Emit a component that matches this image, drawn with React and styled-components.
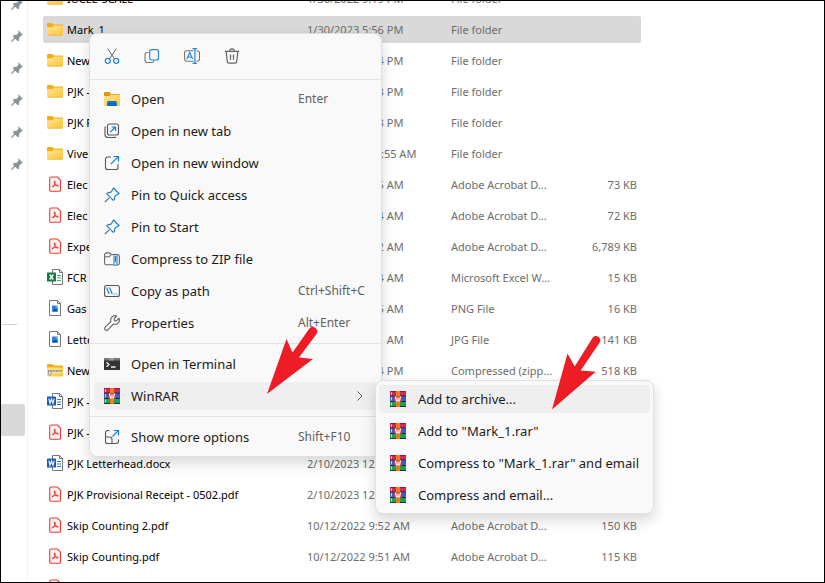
import React from "react";
import styled, { createGlobalStyle } from "styled-components";

const files = [
	{ icon: "folder", name: "IUCEE-SCALE", date: "1/30/2022 9:19 PM", type: "File folder" },
	{ icon: "folder", name: "Mark_1", date: "1/30/2023 5:56 PM", type: "File folder", selected: true },
	{ icon: "folder", name: "New", date: "1/30/2023 5:54 PM", type: "File folder" },
	{ icon: "folder", name: "PJK -", date: "1/30/2023 5:53 PM", type: "File folder" },
	{ icon: "folder", name: "PJK F", date: "1/30/2023 5:53 PM", type: "File folder" },
	{ icon: "folder", name: "Vive", date: "10/12/2022 10:55 AM", type: "File folder" },
	{ icon: "pdf", name: "Elec", date: "2/10/2023 9:55 AM", type: "Adobe Acrobat D...", size: "73 KB" },
	{ icon: "pdf", name: "Elec", date: "2/10/2023 9:54 AM", type: "Adobe Acrobat D...", size: "72 KB" },
	{ icon: "pdf", name: "Expe", date: "2/10/2023 9:52 AM", type: "Adobe Acrobat D...", size: "6,789 KB" },
	{ icon: "excel", name: "FCR", date: "2/10/2023 9:54 AM", type: "Microsoft Excel W...", size: "15 KB" },
	{ icon: "image", name: "Gas", date: "2/10/2023 9:55 AM", type: "PNG File", size: "16 KB" },
	{ icon: "image", name: "Lette", date: "2/10/2023 9:51 AM", type: "JPG File", size: "141 KB" },
	{ icon: "zip", name: "New", date: "2/10/2023 5:54 PM", type: "Compressed (zipp...", size: "518 KB" },
	{ icon: "word", name: "PJK -", date: "2/10/2023 12:35 PM", type: "", size: "" },
	{ icon: "pdf", name: "PJK -", date: "2/10/2023 12:35 PM", type: "", size: "" },
	{ icon: "word", name: "PJK Letterhead.docx", date: "2/10/2023 12:35 PM", type: "", size: "" },
	{ icon: "pdf", name: "PJK Provisional Receipt - 0502.pdf", date: "2/10/2023 12:35 PM", type: "", size: "" },
	{ icon: "pdf", name: "Skip Counting 2.pdf", date: "10/12/2022 9:52 AM", type: "Adobe Acrobat D...", size: "150 KB" },
	{ icon: "pdf", name: "Skip Counting.pdf", date: "10/12/2022 9:51 AM", type: "Adobe Acrobat D...", size: "115 KB" },
	{ icon: "pdf", name: "", date: "", type: "", size: "" },
];

const commands = [
	{ icon: "cut", title: "Cut" },
	{ icon: "copy", title: "Copy" },
	{ icon: "rename", title: "Rename" },
	{ icon: "trash", title: "Delete" },
];

const menuGroups = [
	[
		{ icon: "open", title: "Open", keys: "Enter" },
		{ icon: "newTab", title: "Open in new tab" },
		{ icon: "newWindow", title: "Open in new window" },
		{ icon: "pin", title: "Pin to Quick access" },
		{ icon: "pin", title: "Pin to Start" },
		{ icon: "compress", title: "Compress to ZIP file" },
		{ icon: "path", title: "Copy as path", keys: "Ctrl+Shift+C" },
		{ icon: "wrench", title: "Properties", keys: "Alt+Enter" },
	],
	[
		{ icon: "terminal", title: "Open in Terminal" },
		{ icon: "winrar", title: "WinRAR", active: true, submenu: true },
	],
	[{ icon: "more", title: "Show more options", keys: "Shift+F10" }],
];

const archiveItems = [
	{ title: "Add to archive...", active: true },
	{ title: 'Add to "Mark_1.rar"' },
	{ title: 'Compress to "Mark_1.rar" and email' },
	{ title: "Compress and email..." },
];

const officePage = (
	<path d="M5.5.5h7l3 3v12h-10z M12.5.5v3h3" fill="#fff" stroke="#777" />
);

const icons = {
	folder: (
		<>
			<path d="M0 3.2A1.2 1.2 0 0 1 1.2 2h4l1.6 1.6H15a1 1 0 0 1 1 1V8H0z" fill="#f2ae12" />
			<path d="M0 6.2h5.2L7 4.6h8a1 1 0 0 1 1 1v7.9a1 1 0 0 1-1 1H1a1 1 0 0 1-1-1z" fill="url(#folderFill)" />
			<path d="M.5 14.2h15" stroke="#e5b13b" strokeWidth=".7" />
		</>
	),
	pdf: (
		<>
			<path d="M4 1h6.300l3.200 3.200v9.700a1.300 1.300 0 0 1-1.300 1.300H4a1.300 1.300 0 0 1-1.300-1.300V2.300A1.300 1.300 0 0 1 4 1z" fill="#fff5f4" stroke="#ee3b34" strokeWidth="1.100" />
			<path d="M7.700 4.900c-.9 0-.5 1.700.2 2.900.8 1.400 1.900 2.500 3 2.400 1.100-.2 0-1.400-2.300-1.100-1.700.2-3.400.8-3.300 1.600.2 1 1.700-.3 2.400-2 .5-1.300.7-3.800 0-3.800z" fill="none" stroke="#ee2a24" />
		</>
	),
	excel: (
		<>
			{officePage}
			<path d="M10 6.500h4M10 9h4M10 11.500h4" stroke="#3fae6b" strokeWidth="1.200" />
			<rect y="3.500" width="9" height="9" rx=".6" fill="#107c41" />
			<path d="M2.700 5.500l3.600 5M6.300 5.500l-3.600 5" stroke="#fff" strokeWidth="1.400" />
		</>
	),
	word: (
		<>
			{officePage}
			<path d="M10 6.500h4M10 9h4M10 11.500h4" stroke="#2b7cd3" strokeWidth="1.200" />
			<rect y="3.500" width="9" height="9" rx=".6" fill="#185abd" />
			<path d="M1.800 5.700l1.200 4.600 1.500-4.300L6 10.300l1.200-4.600" fill="none" stroke="#fff" strokeWidth="1.100" />
		</>
	),
	image: (
		<>
			<path d="M2.500.5h8l3 3v12h-11z M10.500.5v3h3" fill="#fff" stroke="#777" />
			<rect x="5" y="5.500" width="6" height="6" fill="#2b86e2" />
			<path d="M5 11.500l3-3 3 3z" fill="#0d4fa6" />
			<path d="M8 5.500h3v3z" fill="#8cc9f8" />
		</>
	),
	zip: (
		<>
			<path d="M0 3.200A1.200 1.200 0 0 1 1.200 2h4l1.600 1.600H15a1 1 0 0 1 1 1V8H0z" fill="#f2ae12" />
			<path d="M0 5.600h16v8a1 1 0 0 1-1 1H1a1 1 0 0 1-1-1z" fill="url(#folderFill)" />
			<path d="M1 9h14" stroke="#8d8d8d" strokeWidth="2" strokeDasharray="1 .6" />
			<path d="M1 10.500h14" stroke="#e8e8e8" />
			<rect x="1.500" y="9" width="2.500" height="4.500" rx="1" fill="#ddd" stroke="#888" strokeWidth=".7" />
		</>
	),
	pinned: (
		<>
			<path d="M9.300 2.200l4.500 4.500-1.400.8-2 2-.3 2.700-1.200 1.200-5.100-5.100L5 7.100l2.700-.4 1.700-2z" fill="#8a939b" />
			<path d="M6.500 9.500L2.500 13.500" stroke="#8a939b" strokeWidth="1.300" />
		</>
	),
	cut: (
		<>
			<path d="M3.600.5l6.800 10.300M12.400.5L5.600 10.800" stroke="#666" />
			<circle cx="3.800" cy="12.800" r="2.500" stroke="#2788d8" strokeWidth="1.300" />
			<circle cx="12.200" cy="12.800" r="2.500" stroke="#2788d8" strokeWidth="1.300" />
		</>
	),
	copy: (
		<>
			<path d="M4.500 4.500H3.200A2.200 2.200 0 0 0 1 6.700v5.600a2.200 2.200 0 0 0 2.200 2.200h4.600A2.200 2.200 0 0 0 10 12.500" stroke="#777" strokeWidth="1.100" />
			<rect x="5.700" y="1.600" width="8.800" height="10.400" rx="2" stroke="#2788d8" strokeWidth="1.200" />
		</>
	),
	rename: (
		<>
			<path d="M9.500 2.700H3A2.500 2.500 0 0 0 .5 5.200v5.600A2.500 2.500 0 0 0 3 13.300h6.500M12.500 2.700h.5a2.500 2.500 0 0 1 2.500 2.500v5.600a2.500 2.500 0 0 1-2.500 2.500h-.5" stroke="#777" strokeWidth="1.100" />
			<path d="M2.800 11L5.700 4.500 8.600 11M3.800 9h3.800M8.500.6h4.500M8.500 15.400H13M10.900.6v14.800" stroke="#2788d8" strokeWidth="1.200" />
		</>
	),
	trash: (
		<path d="M.8 3.300h14.400M5.600 3.300C5.700 1.500 6.500.8 8 .8s2.300.7 2.400 2.500M2.200 3.300l1 10.200c.1 1 .8 1.700 1.800 1.700h6c1 0 1.700-.7 1.800-1.700l1-10.200M6.500 6.500v5.200M9.500 6.500v5.200" stroke="#666" strokeWidth="1.200" />
	),
	open: (
		<>
			<path d="M0 2a1 1 0 0 1 1-1h4.500L7.200 3H15a1 1 0 0 1 1 1v4H0z" fill="#dd9a0c" />
			<path d="M0 5h5.500L7 3.800h8a1 1 0 0 1 1 1V14a1 1 0 0 1-1 1H1a1 1 0 0 1-1-1z" fill="url(#folderFill)" />
			<path d="M3 15v-3.500A1.500 1.500 0 0 1 4.500 10h7a1.500 1.500 0 0 1 1.500 1.500V15z" fill="#0f78d4" />
			<path d="M5 12.800h6" stroke="#094e93" strokeWidth="1.200" />
		</>
	),
	newTab: (
		<>
			<rect x="3.500" y="1" width="11" height="11" rx="2" stroke="#555" strokeWidth="1.100" />
			<path d="M1.500 3.500A2.500 2.500 0 0 0 1 5v6.500A3 3 0 0 0 4 14.500h6.500a2.500 2.500 0 0 0 1.600-.5" stroke="#555" strokeWidth="1.100" />
			<path d="M6.300 9.200l5.200-5.200M7.600 4h3.900v3.900" stroke="#0f7bd6" strokeWidth="1.200" />
		</>
	),
	newWindow: (
		<>
			<path d="M7 2H3.500A2 2 0 0 0 1.500 4v8.500a2 2 0 0 0 2 2H12a2 2 0 0 0 2-2V9" stroke="#555" strokeWidth="1.100" />
			<path d="M6.800 9.200L14.400 1.600M9.500 1.500h5v5" stroke="#0f7bd6" strokeWidth="1.200" />
		</>
	),
	pin: (
		<>
			<path d="M5.200 10.800L.8 15.200" stroke="#666" strokeWidth="1.200" />
			<path d="M9.500 1l5.500 5.500-1 .8-2.800 1.500-.9 3.600-1 1L2.700 6.800l1-1 3.700-.9L8.800 2z" stroke="#1a82d8" strokeWidth="1.200" strokeLinejoin="round" />
		</>
	),
	compress: (
		<>
			<path d="M9.500 13.800H2.500A1.900 1.900 0 0 1 .6 11.900V3.800a1.900 1.900 0 0 1 1.900-1.900h3L7.200 3.500h6.300a1.900 1.900 0 0 1 1.900 1.900v6.500a1.900 1.900 0 0 1-1.900 1.900M.8 5.700h4.500L7.200 3.500" stroke="#666" strokeWidth="1.100" />
			<path d="M10 4v10.200h3V4" stroke="#1a82d8" strokeWidth="1.100" />
			<path d="M10.800 5.500h1.400M10.800 7.500h1.400M10.800 9.500h1.400M11.500 5v6" stroke="#1a82d8" />
		</>
	),
	path: (
		<>
			<rect x=".6" y="2.500" width="14.800" height="11" rx="2" stroke="#555" strokeWidth="1.100" />
			<path d="M2.500 4.500l2.700 6.500M5.500 4.500l2.700 6.500" stroke="#1a82d8" strokeWidth="1.200" />
			<path d="M9.500 11h1.200M12 11h1.200" stroke="#1a82d8" strokeWidth="1.200" />
		</>
	),
	wrench: (
		<path d="M15 3.300l-2.700 2.600-1.900-.3-.3-1.900L12.700 1A4.300 4.300 0 0 0 7 6.500L1.200 12.200a1.800 1.800 0 0 0 2.600 2.600L9.500 9A4.300 4.300 0 0 0 15 3.300z" stroke="#666" strokeWidth="1.100" strokeLinejoin="round" />
	),
	terminal: (
		<>
			<rect y="2" width="16" height="12" rx=".6" fill="#333" />
			<path d="M0 2h16v2.500H0z" fill="#777" />
			<path d="M5 2h5v2.500H5z" fill="#999" />
			<path d="M2.500 6.200L5 8.500l-2.500 2.300M7 11h4.500" stroke="#eee" strokeWidth="1.300" />
		</>
	),
	winrar: (
		<>
			<rect width="16" height="5" fill="#d02a55" />
			<rect y="5" width="16" height="6" fill="#4a58c0" />
			<rect y="11" width="16" height="5" fill="#1fa04a" />
			<path d="M0 .5h16" stroke="#8f1d3f" />
			<path d="M0 5h16M0 10.500h16M0 15.500h16" stroke="#2b2350" />
			<path d="M1.500 1v3M1.500 6.200v3.300M1.500 11.500v3" stroke="#ffd23c" />
			<rect x="6" width="4" height="16" fill="#f07c1e" />
			<rect x="4.500" y="5" width="7" height="6" fill="#d8402a" />
			<path d="M5.500 5.500l1 4.500h3l1-4.500M8 6.500V10" stroke="#fff" strokeWidth="1.200" />
		</>
	),
	more: (
		<>
			<path d="M5.500 1.500H4A2.500 2.500 0 0 0 1.500 4v8.500a2 2 0 0 0 2 2H12a2.500 2.500 0 0 0 2.500-2.500V10.500M1.500 8H5.500A2.500 2.500 0 0 1 8 10.500v4" stroke="#555" strokeWidth="1.100" />
			<path d="M8.500 7.500L14.300 1.700M9.500 1.500h5v5" stroke="#0f7bd6" strokeWidth="1.200" />
		</>
	),
};

function Icon({ name }) {
	return (
		<Glyph viewBox="0 0 16 16" fill="none" aria-hidden="true">
			{icons[name]}
		</Glyph>
	);
}

function Sidebar() {
	return (
		<Side>
			{[1, 2, 3, 4, 5, 6].map((pin) => (
				<SidePin key={pin}>
					<Icon name="pinned" />
				</SidePin>
			))}
			<SideRule />
			<SideCurrent />
		</Side>
	);
}

function FileList() {
	return (
		<Table>
			<colgroup>
				<col width="260" />
				<col width="144" />
				<col width="126" />
				<col width="68" />
			</colgroup>
			<tbody>
				{files.map((file, index) => (
					<Row key={index} $selected={file.selected}>
						<NameCell>
							<FileName>
								<Icon name={file.icon} />
								{file.name}
							</FileName>
						</NameCell>
						<Cell>{file.date}</Cell>
						<Cell>{file.type}</Cell>
						<SizeCell>{file.size}</SizeCell>
					</Row>
				))}
			</tbody>
		</Table>
	);
}

function ContextMenu() {
	return (
		<MainMenu>
			<CommandBar>
				{commands.map(({ icon, title }) => (
					<Command key={title} aria-label={title}>
						<Icon name={icon} />
					</Command>
				))}
			</CommandBar>
			{menuGroups.map((group, index) => (
				<Group key={index}>
					{group.map(({ icon, title, keys, active, submenu }) => (
						<Item key={title} $active={active}>
							<Icon name={icon} />
							<Label>{title}</Label>
							{keys && <Keys>{keys}</Keys>}
							{submenu && (
								<Chevron viewBox="0 0 8 12" aria-hidden="true">
									<path d="M1.500 1.500L6 6l-4.500 4.500" fill="none" stroke="#555" />
								</Chevron>
							)}
						</Item>
					))}
				</Group>
			))}
		</MainMenu>
	);
}

function ArchiveMenu() {
	return (
		<SubMenu>
			{archiveItems.map(({ title, active }) => (
				<SubItem key={title} $active={active}>
					<Icon name="winrar" />
					<Label>{title}</Label>
				</SubItem>
			))}
		</SubMenu>
	);
}

function Arrow({ x, y, shape }) {
	return (
		<Pointer $x={x} $y={y} viewBox="0 0 52 76" aria-hidden="true">
			<path d={shape} fill="#ee1c24" />
		</Pointer>
	);
}

function App() {
	return (
		<>
			<GlobalStyle />
			<Defs aria-hidden="true">
				<linearGradient id="folderFill" x1="0" y1="0" x2="1" y2="1">
					<stop offset="0" stopColor="#ffe59a" />
					<stop offset="1" stopColor="#fcc630" />
				</linearGradient>
			</Defs>
			<Window>
				<Sidebar />
				<FileList />
				<ContextMenu />
				<ArchiveMenu />
				<Arrow x={265} y={319} shape="M1 74L20.500 19l6 13.500L43 9a4.400 4.400 0 0 1 7.500 5L33 37.500l14 1.500z" />
				<Arrow x={550} y={334} shape="M1 74.500L16.500 18.500l7.200 13L41.500 3a4.200 4.200 0 0 1 7.200 4.500L29.700 35.500l15 1.200z" />
			</Window>
		</>
	);
}

export default App;

const GlobalStyle = createGlobalStyle`
	* {
		box-sizing: border-box;
	}

	body {
		margin: 0;
		font-family: "Noto Sans", "Open Sans", sans-serif;
		font-size: 11px;
		color: #1b1b1b;
	}

	button {
		border: 0;
		padding: 0;
		background: none;
		font: inherit;
		color: inherit;
		text-align: left;
	}
`;

const Defs = styled.svg`
	position: absolute;
	width: 0;
	height: 0;
`;

const Glyph = styled.svg`
	display: block;
	flex: none;
	width: 16px;
	height: 16px;
`;

const Window = styled.main`
	position: relative;
	display: flex;
	align-items: flex-start;
	height: 100vh;
	overflow: hidden;
	border: 1px solid #000;
	background: #fff;
`;

const Side = styled.nav`
	flex: none;
	width: 27px;
	height: 100%;
	margin-right: 15px;
	border-right: 1px solid #f2f2f2;
`;

const SidePin = styled.div`
	display: flex;
	justify-content: flex-end;
	align-items: center;
	height: 32px;
	padding-right: 2px;

	&:first-child {
		margin-top: -13px;
	}
`;

const SideRule = styled.hr`
	width: 16px;
	height: 1px;
	margin: 144px 0 79px;
	border: 0;
	background: #d0d0d0;
`;

const SideCurrent = styled.div`
	width: 24px;
	height: 32px;
	border-radius: 0 2px 2px 0;
	background: #d9d9d9;
`;

const Table = styled.table`
	flex: none;
	width: 598px;
	margin-top: -20px;
	table-layout: fixed;
	border-collapse: separate;
	border-spacing: 0 4px;
`;

const Row = styled.tr`
	height: 27px;
	background: ${({ $selected }) => ($selected ? "#d9d9d9" : "none")};
`;

const Cell = styled.td`
	padding: 0 4px;
	line-height: 16px;
	white-space: nowrap;
	color: #6d6d6d;

	&:first-child {
		border-radius: 2px 0 0 2px;
	}

	&:last-child {
		border-radius: 0 2px 2px 0;
	}
`;

const NameCell = styled(Cell)`
	color: #000;
`;

const SizeCell = styled(Cell)`
	text-align: right;
`;

const FileName = styled.span`
	display: flex;
	align-items: center;
	gap: 4px;

	${Glyph} {
		margin-bottom: 2px;
	}
`;

const Menu = styled.div`
	position: absolute;
	border: 1px solid #e0e0e0;
	border-radius: 8px;
	background: #f9f9f9;
	box-shadow: 0 6px 14px rgba(0, 0, 0, 0.16);
	font-size: 13px;
	line-height: 18px;
`;

const MainMenu = styled(Menu)`
	top: 32px;
	left: 88px;
	width: 293px;
`;

const SubMenu = styled(Menu)`
	display: grid;
	gap: 4px;
	top: 379px;
	left: 374px;
	width: 279px;
	padding: 4px 3px;
`;

const CommandBar = styled.div`
	display: flex;
	gap: 12px;
	padding: 8px 8px 9px;
	border-bottom: 1px solid #e4e4e4;
`;

const Command = styled.button`
	display: flex;
	justify-content: center;
	align-items: center;
	width: 28px;
	height: 28px;
`;

const Group = styled.div`
	display: grid;
	gap: 4px;
	padding: 5px 4px 6px;

	& + & {
		padding-top: 6px;
		border-top: 1px solid #e4e4e4;
	}

	&:last-child {
		padding-bottom: 5px;
	}
`;

const Item = styled.button`
	display: flex;
	align-items: center;
	gap: 11px;
	height: 28px;
	padding-left: 10px;
	border-radius: 4px;
	background: ${({ $active }) => ($active ? "#efefef" : "none")};
`;

const SubItem = styled(Item)`
	gap: 12px;
	padding-left: 11px;
`;

const Label = styled.span`
	flex: 1;
	white-space: nowrap;
`;

const Keys = styled.span`
	width: 79px;
	font-size: 12px;
	white-space: nowrap;
	color: #5f5f5f;
`;

const Chevron = styled.svg`
	width: 8px;
	height: 12px;
	margin-right: 13px;
`;

const Pointer = styled.svg`
	position: absolute;
	left: ${({ $x }) => $x}px;
	top: ${({ $y }) => $y}px;
	width: 52px;
	height: 76px;
`;
